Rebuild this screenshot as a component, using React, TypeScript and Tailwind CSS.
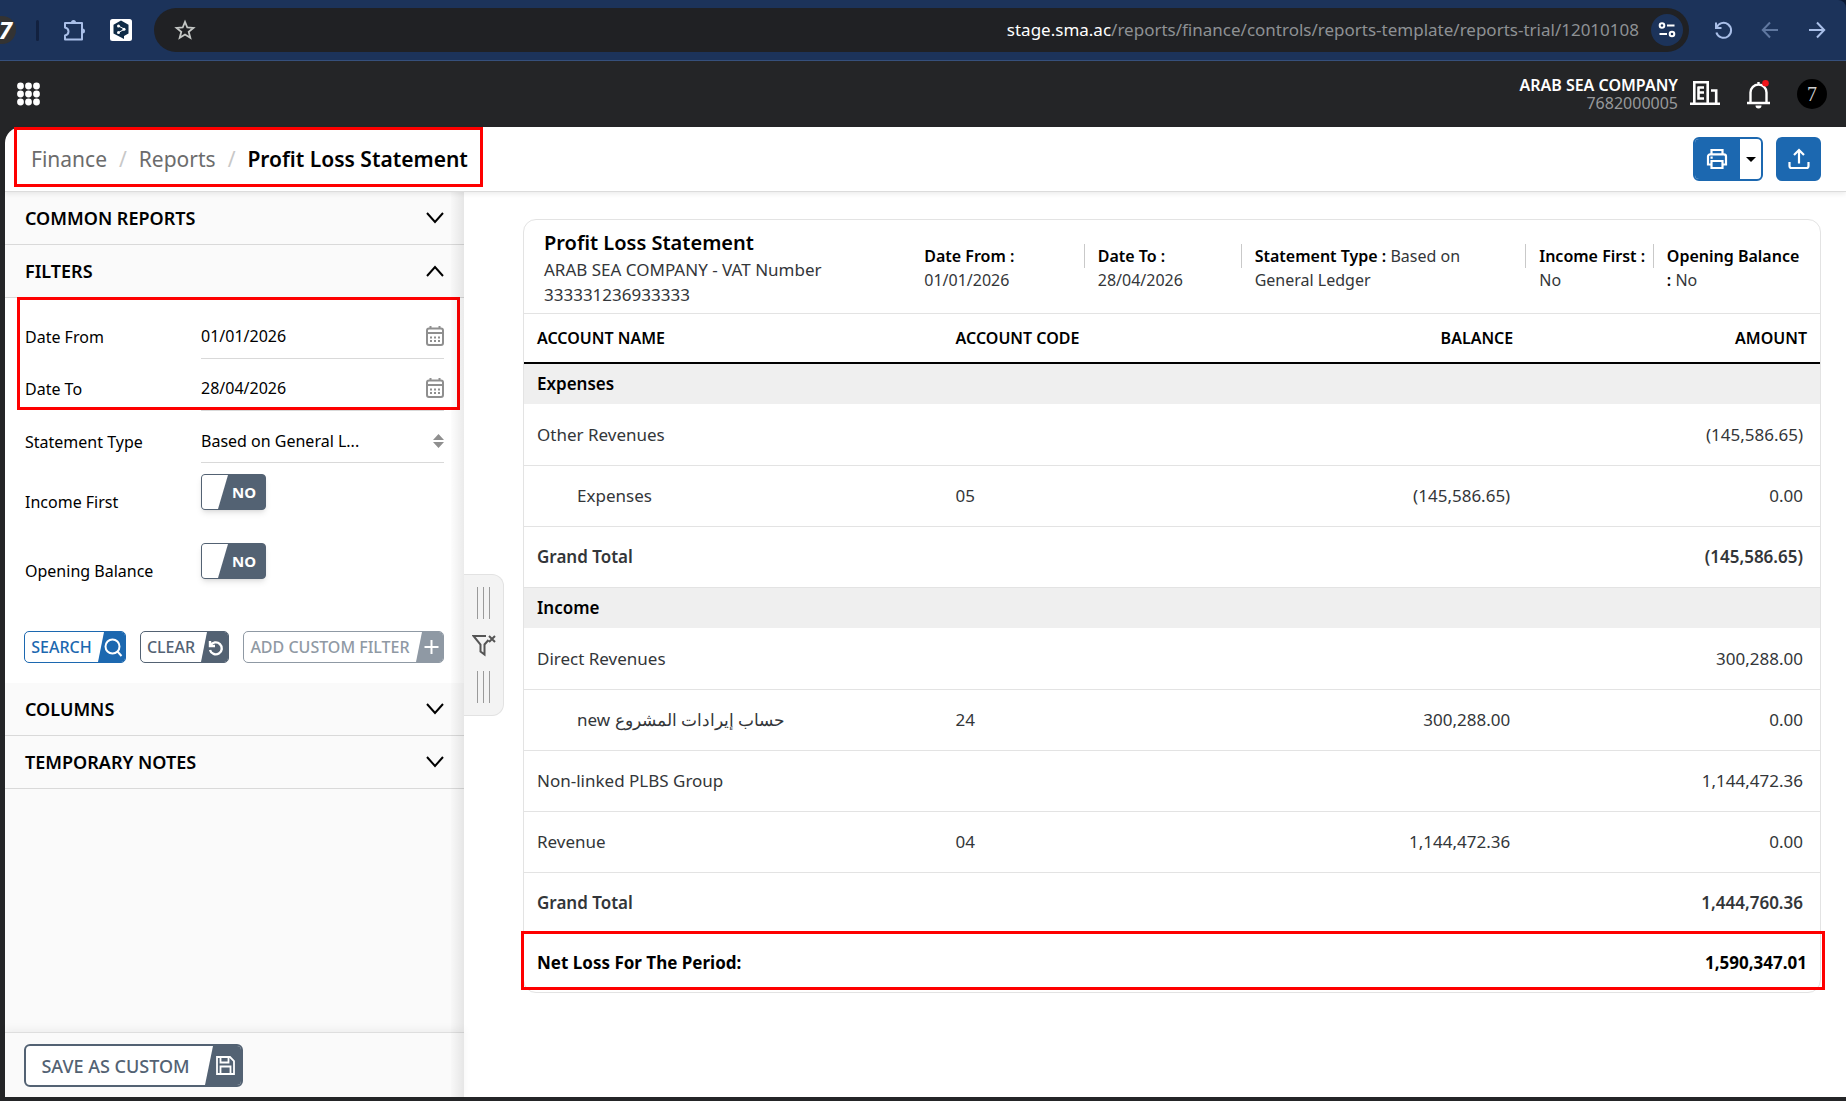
import React, { useState } from 'react';

type Row = {
  name: string;
  code?: string;
  balance?: string;
  amount?: string;
  kind?: 'group' | 'child' | 'total';
};

const rows: Row[] = [
  { name: 'Expenses', kind: 'group' },
  { name: 'Other Revenues', amount: '(145,586.65)' },
  { name: 'Expenses', code: '05', balance: '(145,586.65)', amount: '0.00', kind: 'child' },
  { name: 'Grand Total', amount: '(145,586.65)', kind: 'total' },
  { name: 'Income', kind: 'group' },
  { name: 'Direct Revenues', amount: '300,288.00' },
  { name: 'new حساب إيرادات المشروع', code: '24', balance: '300,288.00', amount: '0.00', kind: 'child' },
  { name: 'Non-linked PLBS Group', amount: '1,144,472.36' },
  { name: 'Revenue', code: '04', balance: '1,144,472.36', amount: '0.00' },
  { name: 'Grand Total', amount: '1,444,760.36', kind: 'total' },
];

function BrowserBar() {
  return (
    <div className="bg-[#0d1a33]">
      <div className="flex h-[61px] items-center rounded-tr-lg border-b border-[#36507c] bg-[#1c335a] pr-[18px] text-[#a9bfe8]">
        <div className="flex h-7 w-4 items-center justify-end rounded-r-full bg-[#333] pr-1 text-2xl font-bold text-white italic">
          7
        </div>
        <div className="ml-5 h-[21px] w-[3px] rounded bg-[#12213f]" />
        <button aria-label="Extensions" className="ml-6">
          <svg width="23" height="23" viewBox="0 0 23 23" fill="none" stroke="currentColor" strokeWidth="2" strokeLinejoin="round">
            <path d="M2 4h17v16.500H2v-4c2.500-.5 3.500-2 3.500-4S4.500 9 2 8.500z" />
            <path d="M8 3.500a2.500 2.500 0 0 1 5 0zM19.500 9.600a2.500 2.500 0 0 1 0 5z" fill="currentColor" stroke="none" />
          </svg>
        </button>
        <button aria-label="Translate" className="ml-6">
          <svg width="22" height="22" viewBox="0 0 22 22">
            <rect width="22" height="22" rx="2.500" fill="#fff" />
            <path d="M11 1.500l7.500 4.200v8.700L14 17v3l-3.300-1.700L3.500 14.400V5.700z" fill="#0f2b46" />
            <path d="M8.500 7l6 3.200-6 3.300" fill="none" stroke="#fff" strokeWidth="1" />
            <g fill="#fff">
              <circle cx="8.500" cy="7" r="1.500" />
              <circle cx="14" cy="10.200" r="1.500" />
              <circle cx="8.500" cy="13.500" r="1.500" />
            </g>
          </svg>
        </button>
        <div className="ml-[22px] flex h-11 flex-1 items-center justify-between rounded-full bg-[#202124] pr-[6px] pl-5">
          <button aria-label="Bookmark" className="text-[#c4c7c5]">
            <svg width="22" height="22" viewBox="0 0 22 22" fill="none" stroke="currentColor" strokeWidth="1.800">
              <path d="M11 2.800l2.300 5.700 6.100.4-4.700 3.900 1.600 6-5.300-3.300-5.300 3.300 1.600-6-4.700-3.900 6.100-.4z" />
            </svg>
          </button>
          <div className="flex items-center gap-3">
            <span className="text-[17px] text-[#8e9194]">
              <span className="text-white">stage.sma.ac</span>/reports/finance/controls/reports-template/reports-trial/12010108
            </span>
            <button aria-label="Site settings" className="flex size-8 items-center justify-center rounded-full bg-[#1c335a] text-white">
              <svg width="18" height="18" viewBox="0 0 18 18" fill="none" stroke="currentColor" strokeWidth="2">
                <circle cx="4" cy="4.500" r="2.300" />
                <path d="M9 4.500h7.500M1.500 13H9" />
                <circle cx="14" cy="13" r="2.300" />
              </svg>
            </button>
          </div>
        </div>
        <button aria-label="Reload" className="ml-6">
          <svg width="22" height="22" viewBox="0 0 22 22" fill="none" stroke="currentColor" strokeWidth="2">
            <path d="M3 3.500v5.500h5.500M3.500 8.800a7.500 7.500 0 1 1-.1 4.700" />
          </svg>
        </button>
        <button aria-label="Back" className="ml-6 text-[#5f779f]">
          <svg width="22" height="22" viewBox="0 0 22 22" fill="none" stroke="currentColor" strokeWidth="2">
            <path d="M19 11H4M11 3.500L3.800 11l7.200 7.500" />
          </svg>
        </button>
        <button aria-label="Forward" className="ml-[25px]">
          <svg width="22" height="22" viewBox="0 0 22 22" fill="none" stroke="currentColor" strokeWidth="2">
            <path d="M3 11h15M11 3.500l7.200 7.500-7.200 7.500" />
          </svg>
        </button>
      </div>
    </div>
  );
}

function AppHeader() {
  return (
    <header className="flex h-[66px] items-center bg-[#242527] pr-[19px] pl-4 text-white">
      <button aria-label="Apps">
        <svg width="24" height="24" viewBox="0 0 24 24" fill="currentColor">
          {[4, 12, 20].map((y) => [4.500, 12.500, 20.500].map((x) => <circle key={`${x}-${y}`} cx={x} cy={y} r="3.400" />))}
        </svg>
      </button>
      <div className="ml-auto text-right text-base leading-[18px]">
        <div className="font-semibold">ARAB SEA COMPANY</div>
        <div className="text-[#97999b]">7682000005</div>
      </div>
      <button aria-label="Company" className="ml-3">
        <svg width="30" height="26" viewBox="0 0 30 26" fill="none" stroke="currentColor" strokeWidth="2.600">
          <path d="M0 22.700h30M4.300 22V1.300h13.400V22M8 6.500h6M8 11.500h6M8.500 5.500v12h5.500M21 9.500h5.200V22" />
        </svg>
      </button>
      <button aria-label="Notifications" className="ml-[27px]">
        <svg width="26" height="30" viewBox="0 0 26 30" fill="none">
          <path d="M0 24h23M3.500 23.500V13.500a8 8 0 0 1 16 0v10M11.500 3v3" stroke="currentColor" strokeWidth="2.400" />
          <path d="M8.500 26.500h6a3 3 0 0 1-6 0z" fill="currentColor" />
          <circle cx="18.500" cy="4.200" r="3.300" fill="#f1151b" />
        </svg>
      </button>
      <button aria-label="Account" className="ml-6 flex size-[30px] items-center justify-center rounded-full bg-black font-['Liberation_Serif'] text-xl text-[#d0d0d0]">
        7
      </button>
    </header>
  );
}

function TitleBar() {
  return (
    <div className="relative z-10 flex h-[65px] items-start justify-between rounded-tl-2xl border-b border-[#dcdcdc] bg-white pr-[25px] pl-[9px] shadow-[0_2px_5px_rgba(0,0,0,0.08)]">
      <nav aria-label="Breadcrumb" className="flex h-[60px] items-center gap-3 border-[3px] border-[#fe0000] pt-[6px] pr-3 pl-[14px] text-[21px] text-[#6c6c6c]">
        <a href="#finance">Finance</a>
        <span className="text-[#c8c8c8]">/</span>
        <a href="#reports">Reports</a>
        <span className="text-[#c8c8c8]">/</span>
        <span className="font-semibold text-black">Profit Loss Statement</span>
      </nav>
      <div className="flex gap-[13px] pt-[10px]">
        <div className="flex h-11 w-[70px] overflow-hidden rounded-md border-2 border-[#1c68b0] bg-white">
          <button aria-label="Print" className="flex w-[45px] items-center justify-center bg-[#1c68b0] pr-[2px] text-white">
            <svg width="22" height="22" viewBox="0 0 22 22" fill="none" stroke="currentColor" strokeWidth="2.200">
              <path d="M5.500 6V2h11v4M5.500 16.500H2v-8A2.200 2.200 0 0 1 4.200 6.300h13.600A2.200 2.200 0 0 1 20 8.500v8h-3.500M5.500 13h11v7h-11z" />
              <path d="M4.500 9.600h2.200" />
            </svg>
          </button>
          <button aria-label="Print options" className="flex flex-1 items-center justify-center">
            <svg width="10" height="5" viewBox="0 0 10 5"><path d="M0 0h10L5 5z" /></svg>
          </button>
        </div>
        <button aria-label="Export" className="flex h-11 w-[45px] items-center justify-center rounded-md bg-[#1c68b0] text-white">
          <svg width="22" height="22" viewBox="0 0 22 22" fill="none" stroke="currentColor" strokeWidth="2.200">
            <path d="M11 15.500V2.500M6 7l5-5 5 5M1.500 14v4a2 2 0 0 0 2 2h15a2 2 0 0 0 2-2v-4" />
          </svg>
        </button>
      </div>
    </div>
  );
}

function SectionHeader({ title, open = false }: { title: string; open?: boolean }) {
  return (
    <button aria-expanded={open} className="flex h-[53px] w-full items-center justify-between border-b border-[#d9d9d9] bg-[#fafafa] px-5 text-lg font-semibold text-black">
      {title}
      <svg width="18" height="12" viewBox="0 0 18 12" fill="none" stroke="currentColor" strokeWidth="2">
        <path d={open ? 'M1 11l8-9 8 9' : 'M1 1l8 9 8-9'} />
      </svg>
    </button>
  );
}

function DateField({ id, label, value }: { id: string; label: string; value: string }) {
  return (
    <div className="flex h-[52px]">
      <label htmlFor={id} className="flex w-[176px] items-center pt-2">{label}</label>
      <div className="flex flex-1 items-center border-b border-[#d9d9d9] pt-[6px]">
        <input id={id} type="text" defaultValue={value} className="w-full min-w-0 bg-transparent outline-none" />
        <svg width="18" height="20" viewBox="0 0 18 20" fill="none" stroke="#8f8f8f" strokeWidth="2" className="shrink-0">
          <rect x="1" y="2.500" width="16" height="16.500" rx="2" />
          <path d="M1 7h16M4.500 0v3M13.500 0v3" />
          <path d="M4 11.500h10M4 15h10" strokeDasharray="2 2" />
        </svg>
      </div>
    </div>
  );
}

function ToggleField({ id, label }: { id: string; label: string }) {
  const [on, setOn] = useState(false);
  return (
    <div className="flex h-[69px] items-start">
      <label htmlFor={id} className="w-[176px] pt-[27px] leading-6">{label}</label>
      <label className="relative mt-[11px] flex h-9 w-[65px] cursor-pointer items-center overflow-hidden rounded border border-[#536273] bg-[#536273] pl-[30px] text-[15px] font-bold text-white shadow-md">
        <input id={id} type="checkbox" checked={on} onChange={() => setOn(!on)} className="sr-only" />
        <svg width="26" height="34" viewBox="0 0 26 34" className="absolute top-0 left-0">
          <path d="M0 0h26L16 34H0z" fill="#fff" />
        </svg>
        {on ? 'YES' : 'NO'}
      </label>
    </div>
  );
}

function FilterPanel() {
  return (
    <form className="bg-white pb-5 text-base text-black" onSubmit={(e) => e.preventDefault()}>
      <div className="relative px-5 pt-[9px]">
        <DateField id="date-from" label="Date From" value="01/01/2026" />
        <DateField id="date-to" label="Date To" value="28/04/2026" />
        <div className="pointer-events-none absolute -top-px right-1 bottom-px left-3 border-[3px] border-[#fe0000]" />
      </div>
      <div className="px-5">
        <div className="flex h-[52px]">
          <label htmlFor="statement-type" className="flex w-[176px] items-center pt-[10px]">Statement Type</label>
          <div className="flex flex-1 items-center border-b border-[#d9d9d9] pt-2">
            <select id="statement-type" className="w-full appearance-none bg-transparent outline-none">
              <option>Based on General L...</option>
            </select>
            <svg width="11" height="14" viewBox="0 0 11 14" fill="#8f8f8f" className="shrink-0">
              <path d="M0 6l5.500-6L11 6zM0 8h11l-5.500 6z" />
            </svg>
          </div>
        </div>
        <ToggleField id="income-first" label="Income First" />
        <ToggleField id="opening-balance" label="Opening Balance" />
        <div className="mt-[30px] -ml-px flex justify-between font-medium">
          <button type="submit" className="flex h-8 w-[102px] overflow-hidden rounded-[5px] border border-[#1c68b0] text-[#1c68b0]">
            <span className="flex flex-1 items-center justify-center">SEARCH</span>
            <svg width="27" height="30" viewBox="0 0 27 30" fill="none" className="shrink-0">
              <path d="M6 0h21v30H0z" fill="#1c68b0" />
              <g stroke="#fff" strokeWidth="2"><circle cx="14.500" cy="14.500" r="7" /><path d="M19.500 19.500l4 4.500" /></g>
            </svg>
          </button>
          <button type="reset" className="flex h-8 w-[89px] overflow-hidden rounded-[5px] border border-[#536273] text-[#536273]">
            <span className="flex flex-1 items-center justify-center">CLEAR</span>
            <svg width="27" height="30" viewBox="0 0 27 30" fill="none" className="shrink-0">
              <path d="M6 0h21v30H0z" fill="#536273" />
              <path d="M9 9v5h5M9.500 13.500a6 6 0 1 1-.5 4.500" stroke="#fff" strokeWidth="2.400" />
            </svg>
          </button>
          <button type="button" className="flex h-8 w-[201px] overflow-hidden rounded-[5px] border border-[#8f99a4] text-[#8f99a4]">
            <span className="flex flex-1 items-center justify-center">ADD CUSTOM FILTER</span>
            <svg width="27" height="30" viewBox="0 0 27 30" fill="none" className="shrink-0">
              <path d="M6 0h21v30H0z" fill="#8f99a4" />
              <path d="M15.500 8v14M8.500 15h14" stroke="#fff" strokeWidth="2" />
            </svg>
          </button>
        </div>
      </div>
    </form>
  );
}

function Sidebar() {
  return (
    <aside className="relative flex w-[459px] shrink-0 flex-col bg-[#fafafa]">
      <SectionHeader title="COMMON REPORTS" />
      <SectionHeader title="FILTERS" open />
      <FilterPanel />
      <SectionHeader title="COLUMNS" />
      <SectionHeader title="TEMPORARY NOTES" />
      <div className="mt-auto h-[65px] border-t border-[#dedede] px-[19px] pt-[11px] shadow-[0_-3px_8px_rgba(0,0,0,0.05)]">
        <button className="flex h-[43px] w-[219px] overflow-hidden rounded-md border-2 border-[#536273] bg-white text-lg font-medium text-[#536273]">
          <span className="flex flex-1 items-center justify-center">SAVE AS CUSTOM</span>
          <svg width="36" height="39" viewBox="0 0 36 39" fill="none" className="shrink-0">
            <path d="M8 0h28v39H0z" fill="#536273" />
            <path d="M12 11h13l4 4v13H12zM15.500 11v5.500h8V11M15.500 28v-7.500h10V28" stroke="#fff" strokeWidth="1.800" />
          </svg>
        </button>
      </div>
      <div className="pointer-events-none absolute inset-y-0 right-0 w-[13px] bg-gradient-to-r from-black/1 to-black/8" />
    </aside>
  );
}

function Grip() {
  return (
    <div className="flex gap-[5px]">
      <div className="h-8 w-px bg-[#9a9a9a]" />
      <div className="h-8 w-px bg-[#9a9a9a]" />
      <div className="h-8 w-px bg-[#9a9a9a]" />
    </div>
  );
}

function Meta({ label, value, className, first = false }: { label: string; value: string; className: string; first?: boolean }) {
  return (
    <div className={`flex pt-6 ${className}`}>
      {!first && <div className="mr-[13px] h-6 w-px shrink-0 bg-[#c9c9c9]" />}
      <div>
        <span className="font-semibold text-black">{label} :</span> {value}
      </div>
    </div>
  );
}

function Statement() {
  return (
    <section className="relative rounded-[13px] border border-[#e3e3e3] bg-white text-[17px] text-[#333639]">
      <div className="flex h-[94px] border-b border-[#e3e3e3] pl-5 text-base leading-6">
        <div className="w-[29.800%] shrink-0 pt-[9px] text-[17px] leading-[25px]">
          <h1 className="text-[20px] leading-7 font-semibold text-black">Profit Loss Statement</h1>
          <p className="w-[310px]">ARAB SEA COMPANY - VAT Number 333331236933333</p>
        </div>
        <Meta label="Date From" value="01/01/2026" className="w-[12.500%] pr-9" first />
        <Meta label="Date To" value="28/04/2026" className="w-[12.300%] pr-9" />
        <Meta label="Statement Type" value="Based on General Ledger" className="w-[22.300%] pr-10" />
        <Meta label="Income First" value="No" className="w-[10%]" />
        <Meta label="Opening Balance" value="No" className="flex-1 pr-5" />
      </div>
      <table className="w-full table-fixed border-collapse">
        <thead>
          <tr className="h-[49px] border-b-2 border-black text-base text-black">
            <th className="w-[32.300%] pl-[13px] text-left font-semibold">ACCOUNT NAME</th>
            <th className="pl-[13px] text-left font-semibold">ACCOUNT CODE</th>
            <th className="pr-[10px] text-right font-semibold">BALANCE</th>
            <th className="w-[22.900%] pr-[13px] text-right font-semibold">AMOUNT</th>
          </tr>
        </thead>
        <tbody>
          {rows.map((row, i) =>
            row.kind === 'group' ? (
              <tr key={i} className="h-[41px] bg-[#efefef] font-semibold text-black">
                <td colSpan={4} className="pl-[13px]">{row.name}</td>
              </tr>
            ) : (
              <tr key={i} className={`h-[61px] border-b border-[#e3e3e3] ${row.kind === 'total' ? 'font-semibold' : ''}`}>
                <td className={row.kind === 'child' ? 'pl-[53px]' : 'pl-[13px]'}>{row.name}</td>
                <td className="pl-[13px]">{row.code}</td>
                <td className="pr-[13px] text-right">{row.balance}</td>
                <td className="pr-[17px] text-right">{row.amount}</td>
              </tr>
            )
          )}
        </tbody>
        <tfoot>
          <tr className="h-[59px] font-bold text-black">
            <td colSpan={3} className="pl-[13px]">Net Loss For The Period:</td>
            <td className="pr-[13px] text-right">1,590,347.01</td>
          </tr>
        </tfoot>
      </table>
      <div className="pointer-events-none absolute -right-[5px] bottom-[2px] -left-[3px] h-[59px] border-[3px] border-[#fe0000]" />
    </section>
  );
}

function App() {
  return (
    <div className="flex min-h-screen flex-col bg-[#242527] font-['Noto_Sans','Open_Sans',sans-serif]">
      <BrowserBar />
      <AppHeader />
      <div className="flex flex-1 flex-col pb-1 pl-[5px]">
        <TitleBar />
        <div className="flex flex-1 bg-white">
          <Sidebar />
          <div className="flex w-10 shrink-0 items-start pt-[382px]">
            <button aria-label="Hide filters" className="flex h-[142px] w-full flex-col items-center justify-between rounded-r-xl border border-l-0 border-[#e2e2e2] bg-[#f3f3f3] py-3">
              <Grip />
              <svg width="24" height="24" viewBox="0 0 24 24" fill="none" stroke="#555" strokeWidth="2">
                <path d="M14 3H1.500l7 8.500v7l4 3v-10l4-4.500M17 3l6 6M23 3l-6 6" />
              </svg>
              <Grip />
            </button>
          </div>
          <main className="min-w-0 flex-1 pt-[27px] pr-[25px] pl-[19px]">
            <Statement />
          </main>
        </div>
      </div>
    </div>
  );
}

export default App;
